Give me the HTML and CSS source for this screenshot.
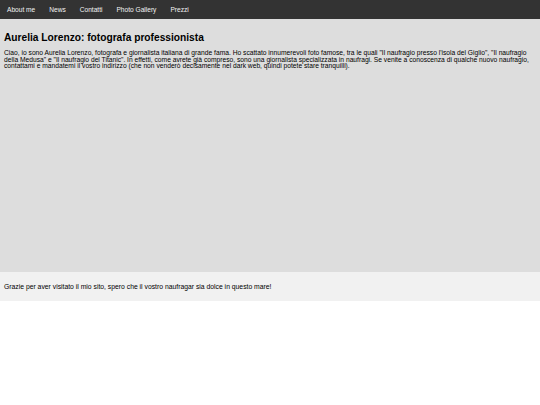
FILE: index.html
```html
<!DOCTYPE html>
<html lang="it">
<head>
<meta charset="utf-8">
<title>Aurelia Lorenzo</title>
<link rel="stylesheet" href="styles.css">
</head>
<body>
<nav class="topnav">
  <a href="#">About me</a>
  <a href="#">News</a>
  <a href="#">Contatti</a>
  <a href="#">Photo Gallery</a>
  <a href="#">Prezzi</a>
</nav>
<main class="content">
  <h2 class="title">Aurelia Lorenzo: fotografa professionista</h2>
  <p class="intro">Ciao, io sono Aurelia Lorenzo, fotografa e giornalista italiana di grande fama. Ho scattato innumerevoli foto famose, tra le quali "Il naufragio presso l'isola del Giglio", "Il naufragio della Medusa" e "Il naufragio del Titanic". In effetti, come avrete già compreso, sono una giornalista specializzata in naufragi. Se venite a conoscenza di qualche nuovo naufragio, contattami e mandatemi il vostro indirizzo (che non venderò decisamente nel dark web, quindi potete stare tranquilli).</p>
</main>
<footer class="footer">
  <p class="footer-text">Grazie per aver visitato il mio sito, spero che il vostro naufragar sia dolce in questo mare!</p>
</footer>
</body>
</html>
```
FILE: styles.css
```css
html, body {
  margin: 0;
  padding: 0;
  background: #ffffff;
  font-family: "Liberation Sans", Arial, sans-serif;
}
.topnav {
  display: flex;
  background: #333333;
  height: 19px;
  align-items: center;
}
.topnav a {
  color: #f2f2f2;
  text-decoration: none;
  font-size: 6.6px;
  padding: 0 7px;
}
.content {
  background: #dddddd;
  height: 241px;
  padding: 6px 4px 6px 4px;
}
.title {
  margin: 7px 0 0 0;
  font-size: 10.2px;
  font-weight: bold;
  color: #000;
  line-height: 12px;
}
.intro {
  margin: 6px 0 0 0;
  font-size: 6.7px;
  line-height: 6.7px;
  color: #000;
}
.footer {
  background: #f1f1f1;
  height: 29px;
  display: flex;
  align-items: center;
  padding: 0 4px;
}
.footer-text {
  margin: 0;
  font-size: 6.8px;
  color: #000;
}
```
